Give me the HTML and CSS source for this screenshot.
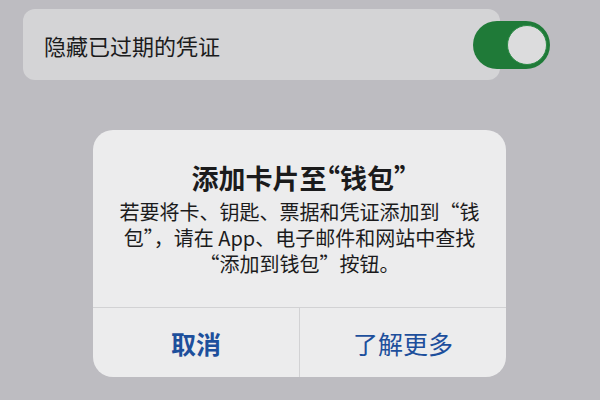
FILE: index.html
```html
<!DOCTYPE html>
<html lang="zh-CN">
<head>
    <meta charset="UTF-8">
    <meta name="viewport" content="width=device-width, initial-scale=1.0">
    <title>钱包设置</title>
    <link rel="stylesheet" href="styles.css">
</head>
<body>
    <section class="settings-row">
        <span class="row-label">隐藏已过期的凭证</span>
        <span class="switch on"><span class="knob"></span></span>
    </section>

    <div class="alert">
        <div class="alert-body">
            <h2 class="alert-title">添加卡片至“钱包”</h2>
            <p class="alert-text">若要将卡、钥匙、票据和凭证添加到“钱<br>包”，请在 App、电子邮件和网站中查找<br>“添加到钱包”按钮。</p>
        </div>
        <div class="alert-actions">
            <button class="alert-btn primary">取消</button>
            <button class="alert-btn">了解更多</button>
        </div>
    </div>
</body>
</html>
```

FILE: styles.css
```css
body {
    margin: 0;
    width: 600px;
    height: 400px;
    overflow: hidden;
    background: #bdbcc1;
    font-family: "Noto Sans CJK SC", "Noto Sans", sans-serif;
    color: #1b1b1c;
}
.settings-row {
    margin: 9px 0 0 23px;
    width: 477px;
    height: 71px;
    box-sizing: border-box;
    padding: 0 0 0 21px;
    background: #d4d4d6;
    border-radius: 12px;
    display: flex;
    align-items: center;
    justify-content: space-between;
}
.row-label {
    font-size: 22px;
}
.switch {
    width: 77px;
    height: 48px;
    margin-right: -50px;
    border-radius: 24px;
    background: #1f7a38;
    display: flex;
    align-items: center;
    justify-content: flex-end;
    padding: 0 3px;
    box-sizing: border-box;
}
.knob {
    width: 40px;
    height: 40px;
    border-radius: 50%;
    background: #dcdcdd;
    border: 1px solid #2b8a45;
    box-sizing: border-box;
}
.alert {
    margin: 50px 0 0 93px;
    width: 413px;
    height: 247px;
    background: #ececed;
    border-radius: 20px;
    display: flex;
    flex-direction: column;
    overflow: hidden;
}
.alert-body {
    padding: 32px 0 0;
    text-align: center;
    flex-grow: 1;
    border-bottom: 1px solid #d2d2d4;
    white-space: nowrap;
}
.alert-title {
    margin: 0;
    font-size: 27px;
    line-height: 32px;
    font-weight: 700;
    /* tighter quote marks in the heading */
    font-feature-settings: "palt";
}
.alert-text {
    margin: 5px 0 0;
    font-size: 20px;
    line-height: 26px;
}
.alert-actions {
    height: 69px;
    display: flex;
}
.alert-btn {
    flex: 1;
    border: none;
    background: none;
    font-family: inherit;
    font-size: 25px;
    color: #1d4f9c;
    padding: 0;
}
.alert-btn + .alert-btn {
    border-left: 1px solid #d2d2d4;
}
.alert-btn.primary {
    font-weight: 700;
}
```
